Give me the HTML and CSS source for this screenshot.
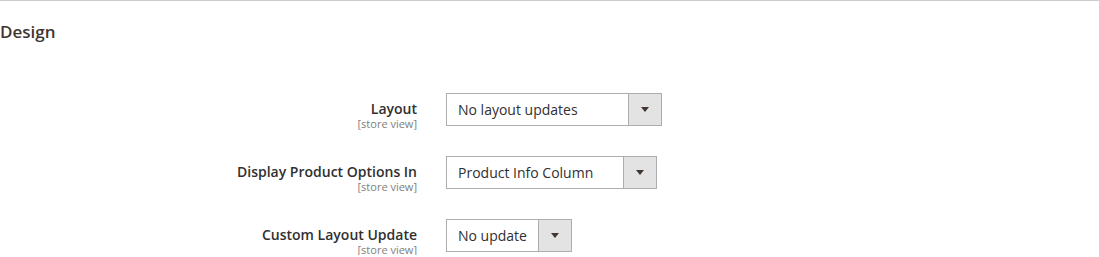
FILE: index.html
```html
<!DOCTYPE html>
<html lang="en">
<head>
<meta charset="utf-8">
<title>Design</title>
<link rel="stylesheet" href="styles.css">
</head>
<body>
<section class="section">
  <h2 class="section-title">Design</h2>
  <div class="fieldset">
    <div class="field">
      <div class="field-label">
        <span class="label-text">Layout</span>
        <span class="scope">[store view]</span>
      </div>
      <div class="field-control">
        <div class="select select-layout">
          <span class="select-value">No layout updates</span>
          <span class="select-arrow"></span>
        </div>
      </div>
    </div>
    <div class="field">
      <div class="field-label">
        <span class="label-text">Display Product Options In</span>
        <span class="scope">[store view]</span>
      </div>
      <div class="field-control">
        <div class="select select-options">
          <span class="select-value">Product Info Column</span>
          <span class="select-arrow"></span>
        </div>
      </div>
    </div>
    <div class="field">
      <div class="field-label">
        <span class="label-text">Custom Layout Update</span>
        <span class="scope">[store view]</span>
      </div>
      <div class="field-control">
        <div class="select select-custom">
          <span class="select-value">No update</span>
          <span class="select-arrow"></span>
        </div>
      </div>
    </div>
  </div>
</section>
</body>
</html>
```

FILE: styles.css
```css
* { box-sizing: border-box; }

html, body {
  margin: 0;
  padding: 0;
  background: #ffffff;
}

body {
  font-family: "Open Sans", "Liberation Sans", sans-serif;
  color: #303030;
}

.section {
  border-top: 1px solid #cccccc;
}

.section-title {
  margin: 19px 0 0 0;
  font-size: 17px;
  line-height: 23px;
  font-weight: 600;
  color: #41362f;
}

.fieldset {
  margin-top: 50px;
  display: flex;
  flex-direction: column;
  gap: 27px;
}

.field {
  display: grid;
  grid-template-columns: 417px auto;
  column-gap: 29px;
  align-items: start;
}

.field-label {
  display: flex;
  flex-direction: column;
  align-items: flex-end;
  text-align: right;
  padding-top: 7px;
}

.label-text {
  font-size: 14px;
  line-height: 18px;
  font-weight: 600;
  color: #303030;
}

.scope {
  font-size: 11px;
  line-height: 11px;
  color: #808080;
}

.field-control {
  display: flex;
}

.select {
  display: flex;
  align-items: stretch;
  height: 33px;
  border: 1px solid #adadad;
  background: #ffffff;
}

.select-layout { width: 216px; }
.select-options { width: 211px; }
.select-custom { width: 126px; }

.select-value {
  flex: 1;
  display: flex;
  align-items: center;
  padding-left: 11px;
  font-size: 14px;
  color: #303030;
  white-space: nowrap;
}

.select-arrow {
  width: 33px;
  flex: none;
  border-left: 1px solid #adadad;
  background: #e3e3e3;
  display: flex;
  align-items: center;
  justify-content: center;
}

.select-arrow::after {
  content: "";
  width: 0;
  height: 0;
  border-left: 4px solid transparent;
  border-right: 4px solid transparent;
  border-top: 5px solid #41362f;
}
```
